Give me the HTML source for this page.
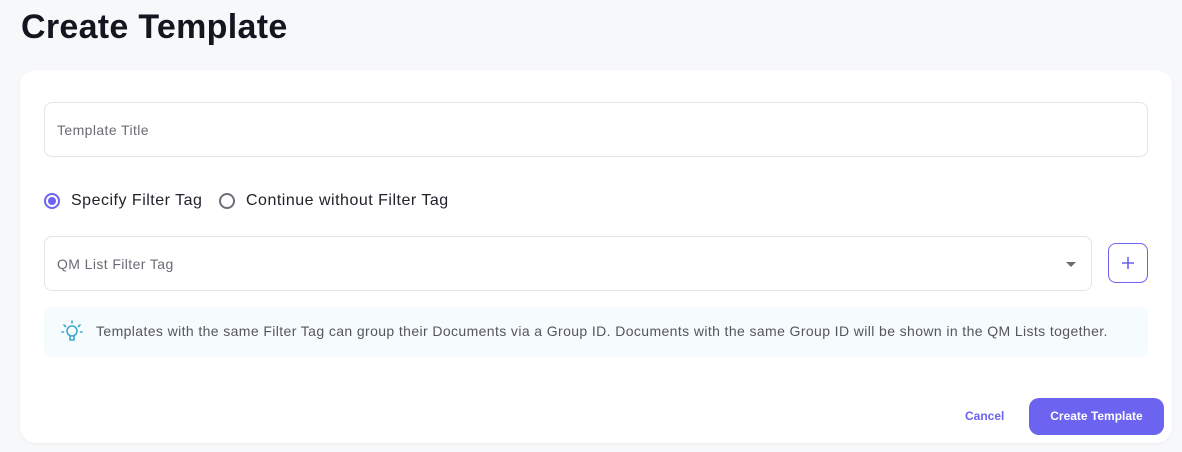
<!DOCTYPE html>
<html><head><style>
body{margin:0;width:1182px;height:452px;background:#f7f8fa;font-family:"Liberation Sans",sans-serif;position:relative;overflow:hidden}
h1{position:absolute;left:21px;top:8px;margin:0;font-size:34px;font-weight:bold;color:#15151f;letter-spacing:0.3px}
.card{position:absolute;left:20px;top:70px;width:1152px;height:373px;background:#fff;border-radius:16px;box-shadow:0 1px 3px rgba(0,0,0,.05)}
.inp{position:absolute;border:1px solid #e3e3e8;border-radius:8px;background:#fff;font-size:14px;letter-spacing:0.4px;color:#6b6b75;box-sizing:border-box;padding-left:12px;display:flex;align-items:center}
.radio{position:absolute;top:192px;display:flex;align-items:center;font-size:16px;letter-spacing:0.5px;color:#22222a}
.r{width:16px;height:16px;border-radius:50%;border:2px solid #6e6e78;box-sizing:border-box;margin-right:11px;position:relative}
.r.on{border-color:#6c63f0}
.r.on:after{content:"";position:absolute;left:2px;top:2px;width:8px;height:8px;border-radius:50%;background:#6c63f0}
</style></head><body>
<h1>Create Template</h1>
<div class="card"></div>
<div class="inp" style="left:44px;top:102px;width:1104px;height:55px">Template Title</div>
<div class="radio" style="left:44px"><div class="r on"></div>Specify Filter Tag</div>
<div class="radio" style="left:219px"><div class="r"></div>Continue without Filter Tag</div>
<div class="inp" style="left:44px;top:236px;width:1048px;height:55px">QM List Filter Tag
<div style="position:absolute;right:15px;top:25px;width:0;height:0;border-left:5px solid transparent;border-right:5px solid transparent;border-top:5px solid #6b6b75"></div></div>
<div style="position:absolute;left:1108px;top:243px;width:40px;height:40px;box-sizing:border-box;border:1px solid #6c63f0;border-radius:8px">
<svg width="38" height="38" viewBox="0 0 38 38" stroke="#6c63f0" stroke-width="1.6"><path d="M19 13v12M13 19h12"/></svg></div>
<div style="position:absolute;left:44px;top:307px;width:1104px;height:50px;background:#f6fbfd;border-radius:8px"></div>
<svg style="position:absolute;left:61px;top:320px" width="22" height="24" viewBox="0 0 22 24" fill="none" stroke="#3fa9cf" stroke-width="1.6" stroke-linecap="round"><circle cx="11" cy="11" r="5"/><path d="M9 16v4h4v-4M11 1v2M3 5l1.5 1.5M19 5l-1.5 1.5M1 12h1.5M21 12h-1.5"/></svg>
<div style="position:absolute;left:96px;top:323px;font-size:14px;letter-spacing:0.39px;color:#55555f;white-space:nowrap">Templates with the same Filter Tag can group their Documents via a Group ID. Documents with the same Group ID will be shown in the QM Lists together.</div>
<div style="position:absolute;left:965px;top:409px;font-size:12px;font-weight:bold;color:#6c63f0">Cancel</div>
<div style="position:absolute;left:1029px;top:398px;width:135px;height:37px;background:#6c63f0;border-radius:10px;color:#fff;font-size:12px;font-weight:bold;text-align:center;line-height:37px">Create Template</div>
</body></html>
